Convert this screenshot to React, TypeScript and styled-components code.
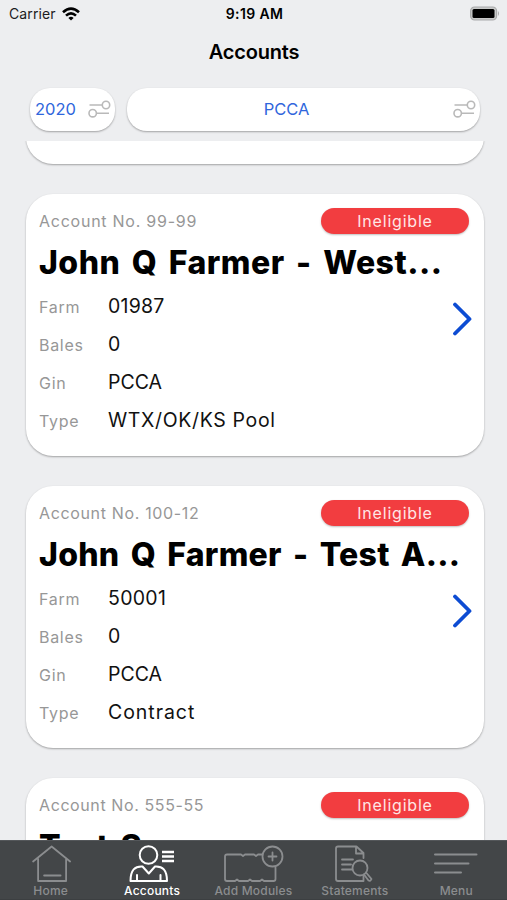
import React from 'react';
import styled, { createGlobalStyle } from 'styled-components';

const GlobalStyle = createGlobalStyle`
  * { box-sizing: border-box; }
  body { margin: 0; background: #edeef0; font-family: Inter, "Liberation Sans", sans-serif; }
`;

const Screen = styled.div`
  display: flex;
  flex-direction: column;
  width: 507px;
  height: 900px;
  overflow: hidden;
  background: #edeef0;
  color: #000;
`;

const StatusBar = styled.header`
  display: grid;
  grid-template-columns: 1fr auto 1fr;
  align-items: center;
  flex: none;
  height: 28px;
  padding: 0 7px 1px 9px;
  font-size: 14px;
`;

const Carrier = styled.div`
  display: flex;
  align-items: center;
  gap: 6px;
  color: #1c1c1e;
  letter-spacing: 0.1px;
`;

const Clock = styled.div`
  font-weight: 600;
  letter-spacing: 0.35px;
`;

const BatterySlot = styled.div`
  display: flex;
  justify-content: flex-end;
  padding-bottom: 1px;
`;

const PageTitle = styled.h1`
  flex: none;
  height: 60px;
  margin: 0;
  padding: 11px 0 0 1px;
  font-size: 20px;
  line-height: 27px;
  font-weight: 600;
  letter-spacing: -0.2px;
  text-align: center;
`;

const Filters = styled.div`
  display: flex;
  flex: none;
  gap: 12px;
  height: 53px;
  padding: 0 27px 10px 30px;
`;

const FilterButton = styled.button<{ $width: number }>`
  display: flex;
  align-items: center;
  width: ${(p) => p.$width}px;
  height: 43px;
  padding: 0 4px 2px 5px;
  border: 0;
  border-radius: 20px;
  background: #fff;
  box-shadow: 0 1px 2px rgba(0, 0, 0, 0.32);
  color: #2f66dc;
  font: 400 16.5px Inter, sans-serif;
`;

const FilterLabel = styled.span<{ $center?: boolean }>`
  flex: 1;
  text-align: ${(p) => (p.$center ? 'center' : 'left')};
  padding-right: ${(p) => (p.$center ? 12 : 0)}px;
`;

const List = styled.main`
  display: flex;
  flex: none;
  flex-direction: column;
  gap: 30px;
  height: 699px;
  overflow: hidden;
  padding: 0 23px 0 26px;
`;

const Card = styled.article<{ $scrolled?: boolean }>`
  flex: none;
  height: 262px;
  margin-top: ${(p) => (p.$scrolled ? -238.6 : 0)}px;
  padding: 13.6px 12px 0 13px;
  border-radius: 27px;
  background: #fff;
  box-shadow: 0 1px 2px rgba(0, 0, 0, 0.32);
`;

const CardHeader = styled.div`
  display: flex;
  justify-content: space-between;
  height: 27px;
  padding-right: 3px;
`;

const AccountNumber = styled.span<{ $spacing: number }>`
  color: #979797;
  font-size: 16px;
  line-height: 26px;
  letter-spacing: ${(p) => p.$spacing}px;
`;

const Badge = styled.span`
  width: 148px;
  height: 26px;
  border-radius: 13px;
  background: #f23d40;
  box-shadow: 0 1px 2px rgba(0, 0, 0, 0.25);
  color: #ffe6e5;
  font-size: 16px;
  line-height: 26px;
  letter-spacing: 0.8px;
  text-align: center;
`;

const Name = styled.h2<{ $spacing: number }>`
  height: 54px;
  margin: 0;
  font-size: 32px;
  line-height: 55px;
  font-weight: 800;
  letter-spacing: ${(p) => p.$spacing}px;
  word-spacing: 4px;
  white-space: nowrap;
`;

const CardBody = styled.div`
  display: flex;
  justify-content: space-between;
`;

const Details = styled.dl`
  display: grid;
  grid-template-columns: 69px auto;
  grid-auto-rows: 38px;
  margin: 0;
  line-height: 35px;
`;

const Term = styled.dt`
  padding-top: 1px;
  color: #979797;
  font-size: 16px;
  letter-spacing: 0.7px;
`;

const Value = styled.dd<{ $spacing: number }>`
  margin: 0;
  color: #111;
  font-size: 19.5px;
  letter-spacing: ${(p) => p.$spacing}px;
`;

const Chevron = styled.svg`
  width: 22px;
  height: 36px;
  margin-top: 11px;
`;

const TabBar = styled.nav`
  display: grid;
  grid-template-columns: repeat(5, 1fr);
  flex: none;
  height: 60px;
  background: #434648;
  border-top: 1px solid #54575a;
  border-bottom: 1px solid #3c3f41;
`;

const Tab = styled.a<{ $active?: boolean }>`
  display: flex;
  flex-direction: column;
  align-items: center;
  color: ${(p) => (p.$active ? '#fff' : '#8b8d8f')};
  font-size: 12px;
  line-height: 16px;
  font-weight: 500;
  letter-spacing: 0.2px;
  white-space: nowrap;
`;

const TabIcon = styled.svg`
  width: 64px;
  height: 42px;
  fill: none;
  stroke: currentColor;
  stroke-width: 1.8;
  stroke-linejoin: round;
  stroke-linecap: round;
`;

const WifiIcon = () => (
  <svg width="18" height="14" viewBox="0 0 18 14" fill="none" stroke="#000" strokeWidth="2.6">
    <path d="M1 5.2Q9-2.1 17 5.2M4 8.6Q9 4 14 8.6" />
    <path d="M6.4 11Q9 8.7 11.6 11L9 13.6Z" fill="#000" stroke="none" />
  </svg>
);

const BatteryIcon = () => (
  <svg width="31" height="15" viewBox="0 0 31 15">
    <rect x="1.6" y="1" width="26" height="13" rx="4" fill="#c9caca" stroke="#a9aaab" strokeWidth="1.2" />
    <rect x="3.5" y="3" width="22" height="9" rx="1.5" />
    <path d="M29 5q2 2.5 0 5Z" fill="#a9aaab" />
  </svg>
);

const TuneIcon = () => (
  <svg width="23" height="18" viewBox="0 0 23 18" fill="none" stroke="#b9b9b9" strokeWidth="1.6">
    <path d="M1.5 5H14M9 13.2H21" />
    <circle cx="18" cy="5" r="3.7" />
    <circle cx="4.7" cy="13.2" r="3.7" />
  </svg>
);

const icons = {
  home: (
    <path d="M13.500 20.500 32 5.500 50.500 20.500M18.500 18V40H46.500V18M24.500 34.500H41" transform="translate(.6 0)" />
  ),
  accounts: (
    <g strokeWidth="2">
      <circle cx="28.5" cy="14" r="8.8" />
      <path d="M22.500 25.500C15 25 10.500 29 10.500 40H47C47 29 42.500 25 35 25.500L28.800 32.500L22.500 25.500M17 34V40M40.500 34V40" />
      <path d="M42 11H54M42 15.500H54M42 20H54" strokeLinecap="butt" strokeWidth="2.300" />
    </g>
  ),
  modules: (
    <path d="M41 13.500H37L35 15L33 13.500H24L22 15L20 13.500H6Q4 13.500 4 15.500V38Q4 40 6 40H14L16 38.500L18 40H27L29 38.500L31 40H39L41 38.500L43 40H52.500Q54.500 40 54.500 38V26.500M61.500 15.500A10 10 0 1 1 41.500 15.500A10 10 0 1 1 61.500 15.500M47.500 15.500H55.500M51.500 11.500V19.500" />
  ),
  statements: (
    <>
      <path d="M40.500 17V12L33.500 5.500H15Q13 5.500 13 7.500V38Q13 40 15 40H40.500V35M33 6V12.500H40M19 18.500H30M19 23.500H28M19 28.500H29" />
      <circle cx="37" cy="27" r="7.5" />
      <path d="M41 33.500 45.500 39.500Q47.500 40.500 48.500 38L43 31.500" />
    </>
  ),
  menu: <path d="M11 13.500H52.500M11 22.500H44.500M11 31.500H37" strokeWidth="2" />,
};

const tabs: { icon: keyof typeof icons; label: string; active?: boolean }[] = [
  { icon: 'home', label: 'Home' },
  { icon: 'accounts', label: 'Accounts', active: true },
  { icon: 'modules', label: 'Add Modules' },
  { icon: 'statements', label: 'Statements' },
  { icon: 'menu', label: 'Menu' },
];

type Account = {
  no: string;
  noSpacing: number;
  name: string;
  nameSpacing: number;
  rows: [string, string, number][];
};

const accounts: Account[] = [
  {
    no: '99-99',
    noSpacing: 0.75,
    name: 'John Q Farmer - West...',
    nameSpacing: 0.48,
    rows: [['Farm', '01987', 0.2], ['Bales', '0', 0], ['Gin', 'PCCA', 0], ['Type', 'WTX/OK/KS Pool', 0.65]],
  },
  {
    no: '100-12',
    noSpacing: 0.65,
    name: 'John Q Farmer - Test A...',
    nameSpacing: 0.26,
    rows: [['Farm', '50001', 0.3], ['Bales', '0', 0], ['Gin', 'PCCA', 0], ['Type', 'Contract', 0.95]],
  },
  { no: '555-55', noSpacing: 0.6, name: 'Test S', nameSpacing: 0.3, rows: [] },
];

const AccountCard = ({ account }: { account: Account }) => (
  <Card>
    <CardHeader>
      <AccountNumber $spacing={account.noSpacing}>Account No. {account.no}</AccountNumber>
      <Badge>Ineligible</Badge>
    </CardHeader>
    <Name $spacing={account.nameSpacing}>{account.name}</Name>
    <CardBody>
      <Details>
        {account.rows.map(([term, value, spacing]) => (
          <React.Fragment key={term}>
            <Term>{term}</Term>
            <Value $spacing={spacing}>{value}</Value>
          </React.Fragment>
        ))}
      </Details>
      <Chevron viewBox="0 0 22 36" fill="none" stroke="#0d4cd3" strokeWidth="3.8" strokeLinecap="round" strokeLinejoin="round">
        <path d="M5 4.500 19.500 19 5 33.500" />
      </Chevron>
    </CardBody>
  </Card>
);

export default function App() {
  return (
    <>
      <GlobalStyle />
      <Screen>
        <StatusBar>
          <Carrier>Carrier <WifiIcon /></Carrier>
          <Clock>9:19 AM</Clock>
          <BatterySlot><BatteryIcon /></BatterySlot>
        </StatusBar>
        <PageTitle>Accounts</PageTitle>
        <Filters>
          <FilterButton $width={85}>
            <FilterLabel>2020</FilterLabel>
            <TuneIcon />
          </FilterButton>
          <FilterButton $width={353}>
            <FilterLabel $center>PCCA</FilterLabel>
            <TuneIcon />
          </FilterButton>
        </Filters>
        <List>
          <Card $scrolled />
          {accounts.map((a) => <AccountCard key={a.no} account={a} />)}
        </List>
        <TabBar>
          {tabs.map((t) => (
            <Tab key={t.label} $active={t.active}>
              <TabIcon viewBox="0 0 64 42">{icons[t.icon]}</TabIcon>
              {t.label}
            </Tab>
          ))}
        </TabBar>
      </Screen>
    </>
  );
}
